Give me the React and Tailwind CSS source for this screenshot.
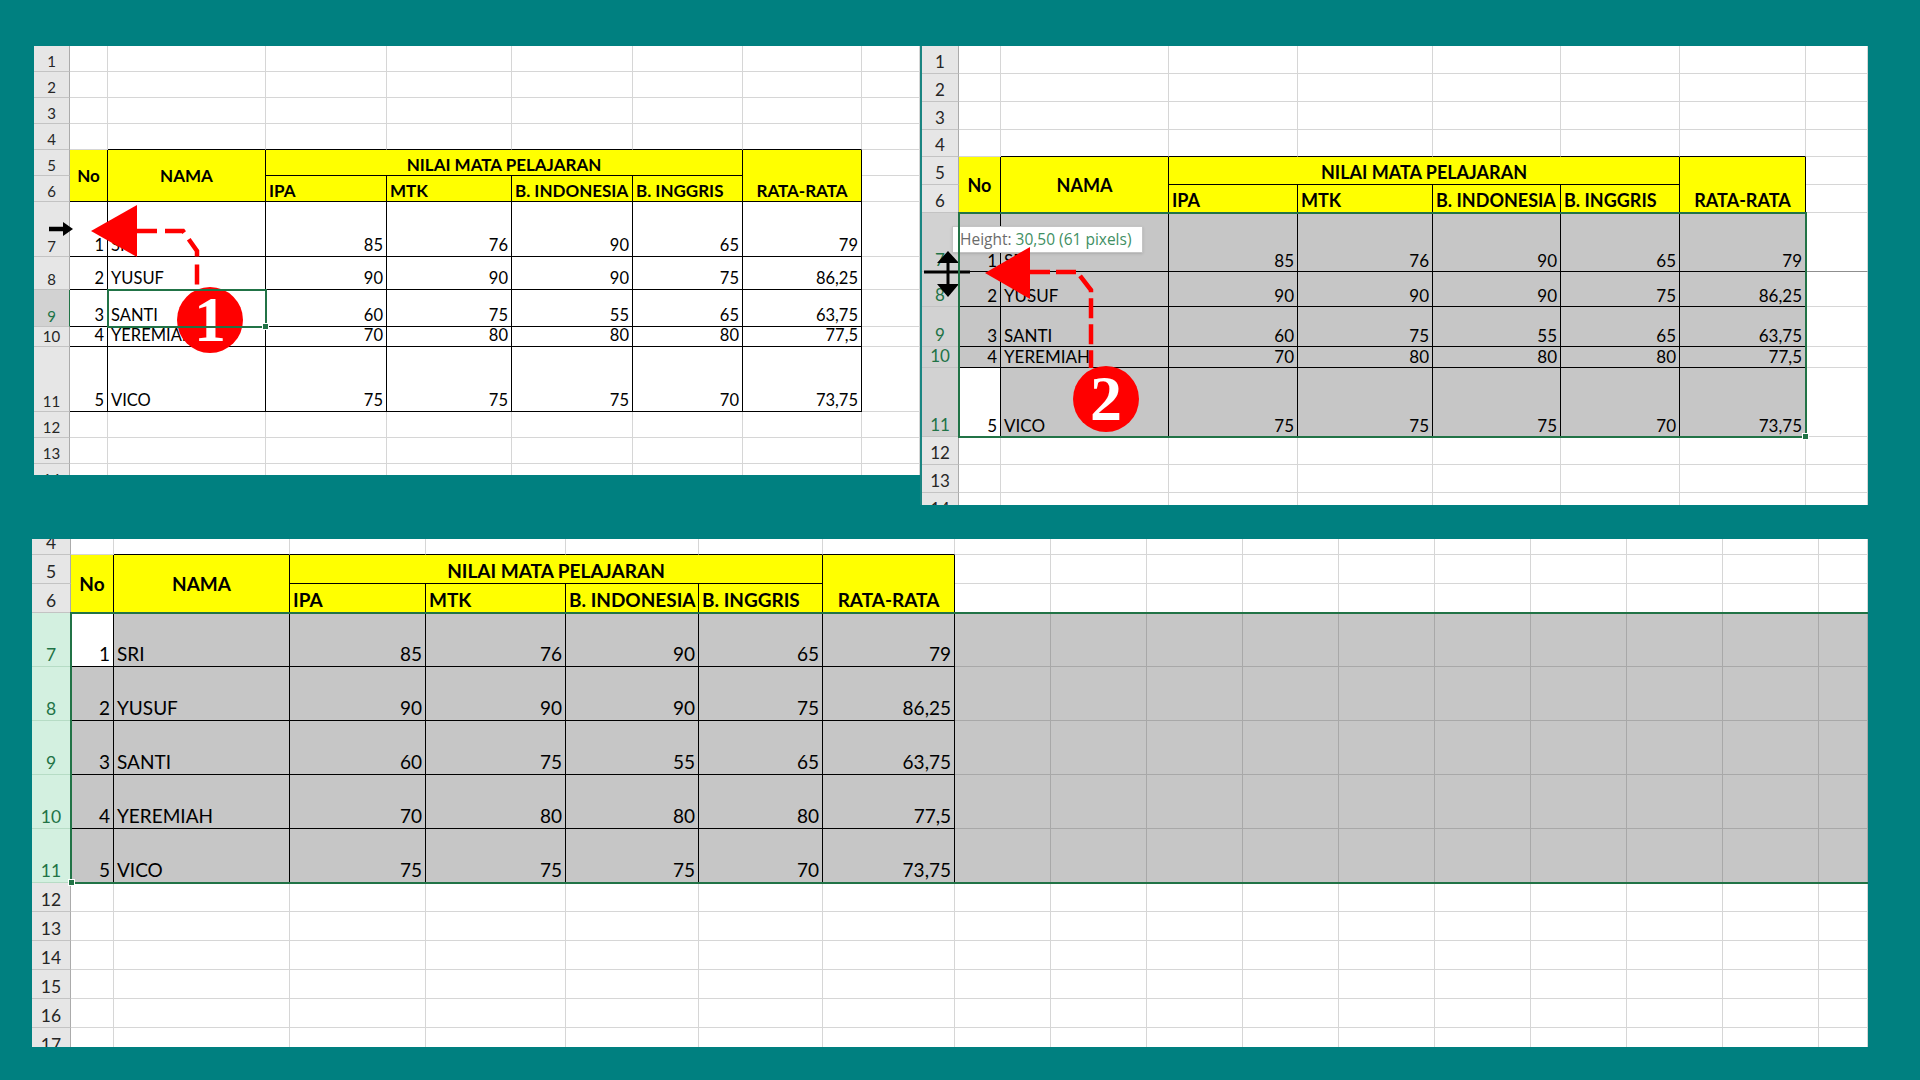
import React from 'react';

const DATA = [
  ['1', 'SRI', '85', '76', '90', '65', '79'],
  ['2', 'YUSUF', '90', '90', '90', '75', '86,25'],
  ['3', 'SANTI', '60', '75', '55', '65', '63,75'],
  ['4', 'YEREMIAH', '70', '80', '80', '80', '77,5'],
  ['5', 'VICO', '75', '75', '75', '70', '73,75'],
];

const SUBJECTS = ['IPA', 'MTK', 'B. INDONESIA', 'B. INGGRIS'];

const GRID = 'border-b border-r border-[#d6d6d6]';
const HEAD = 'flex bg-[#ffff00] font-bold border-b border-r border-black leading-[1.2] whitespace-nowrap';
const ROWHEAD = {
  normal: 'bg-[#e6e6e6] text-[#262626] border-b-[#c3c3c3] border-r-[#ababab]',
  picked: 'bg-[#d2d2d2] text-[#217346] border-b-[#c3c3c3] border-r-[#217346]',
  full: 'bg-[#d3f0e0] text-[#217346] border-b-[#b6dcc5] border-r-[#217346]',
};

const range = (a, b) => Array.from({ length: b - a + 1 }, (_, i) => a + i);

function Sheet({ cfg }) {
  const out = [];
  const extras = (r) =>
    Array.from({ length: cfg.extra }, (_, i) => <div key={`${r}x${i}`} className={cfg.extraCls(r)} />);

  cfg.rows.forEach((r) => {
    out.push(
      <div
        key={`h${r}`}
        className={`flex items-end justify-center pb-[1px] leading-[1.2] border-b border-r ${cfg.numText} ${cfg.rowHead(r)}`}
      >
        {r}
      </div>
    );

    if (r === 5) {
      out.push(
        <div key="no" className={`${HEAD} row-span-2 items-center justify-center pt-[2px] ${cfg.headText}`}>No</div>,
        <div key="nama" className={`${HEAD} row-span-2 items-center justify-center pt-[2px] ${cfg.headText}`}>NAMA</div>,
        <div key="nilai" className={`${HEAD} col-span-4 items-end justify-center ${cfg.headText}`}>
          NILAI MATA PELAJARAN
        </div>,
        <div key="rata" className={`${HEAD} row-span-2 items-end justify-center ${cfg.headText}`}>
          RATA-RATA
        </div>,
        ...extras(r)
      );
    } else if (r === 6) {
      SUBJECTS.forEach((s) =>
        out.push(
          <div key={s} className={`${HEAD} items-end pl-[3px] ${cfg.headText}`}>{s}</div>
        )
      );
      out.push(...extras(r));
    } else if (r >= 7 && r <= 11) {
      DATA[r - 7].forEach((v, c) =>
        out.push(
          <div
            key={`${r}-${c}`}
            className={`flex items-end px-[3px] border-b border-r border-black leading-[1.2] whitespace-nowrap ${cfg.dataText} ${c === 1 ? 'justify-start' : 'justify-end'} ${cfg.fill(r, c)}`}
          >
            {v}
          </div>
        )
      );
      out.push(...extras(r));
    } else {
      range(0, 6).forEach((c) =>
        out.push(
          <div
            key={`${r}-${c}`}
            className={r === 4 && c > 0 ? 'border-b border-r border-r-[#d6d6d6] border-b-black' : GRID}
          />
        )
      );
      out.push(...extras(r));
    }
  });

  return (
    <div className={`relative grid ${cfg.grid}`}>
      {out}
      {cfg.overlay}
    </div>
  );
}

const P1 = {
  grid: 'grid-cols-[36px_38px_158px_121px_125px_121px_110px_119px_58px] grid-rows-[26px_26px_26px_26px_26px_26px_55px_33px_37px_20px_65px_26px_26px_26px]',
  rows: range(1, 14),
  extra: 1,
  numText: 'text-[15px]',
  headText: 'text-[17px]',
  dataText: 'text-[16.5px]',
  rowHead: (r) => (r === 9 ? ROWHEAD.picked : ROWHEAD.normal),
  fill: () => 'bg-white',
  extraCls: () => GRID,
  overlay: (
    <div className="absolute -inset-px z-10 col-start-3 col-end-4 row-start-9 row-end-10 border-2 border-[#217346]">
      <span className="absolute -right-[4px] -bottom-[4px] w-[7px] h-[7px] bg-[#217346] border border-white" />
    </div>
  ),
};

const P2 = {
  grid: 'grid-cols-[37px_42px_168px_129px_135px_128px_119px_126px_62px] grid-rows-[28px_28px_28px_27px_28px_28px_59px_35px_40px_21px_69px_28px_28px_28px]',
  rows: range(1, 14),
  extra: 1,
  numText: 'text-[17px]',
  headText: 'text-[18px]',
  dataText: 'text-[17px]',
  rowHead: (r) => (r >= 7 && r <= 11 ? ROWHEAD.picked : ROWHEAD.normal),
  fill: (r, c) => (r === 11 && c === 0 ? 'bg-white' : 'bg-[#c6c6c6]'),
  extraCls: (r) => (r === 7 ? 'border-b border-r border-b-[#8f8f8f] border-r-[#d6d6d6]' : GRID),
  overlay: (
    <div className="absolute -inset-px z-10 col-start-2 col-end-9 row-start-7 row-end-12 border-2 border-[#217346]">
      <span className="absolute -right-[4px] -bottom-[4px] w-[7px] h-[7px] bg-[#217346] border border-white" />
    </div>
  ),
};

const P3 = {
  grid: '-mt-[13px] grid-cols-[39px_43px_176px_136px_140px_133px_124px_132px_96px_96px_96px_96px_96px_96px_96px_96px_96px_49px] grid-rows-[29px_29px_29px_54px_54px_54px_54px_54px_29px_29px_29px_29px_29px_29px]',
  rows: range(4, 17),
  extra: 10,
  numText: 'text-[17.5px]',
  headText: 'text-[19px]',
  dataText: 'text-[19px]',
  rowHead: (r) => (r >= 7 && r <= 11 ? ROWHEAD.full : ROWHEAD.normal),
  fill: (r, c) => (r === 7 && c === 0 ? 'bg-white' : 'bg-[#c6c6c6]'),
  extraCls: (r) => (r >= 7 && r <= 11 ? 'bg-[#c6c6c6] border-b border-r border-[#a8a8a8]' : GRID),
  overlay: (
    <div className="absolute -inset-px z-10 col-start-2 col-end-[-1] row-start-4 row-end-9 border-y-2 border-l-2 border-[#217346]">
      <span className="absolute -left-[4px] -bottom-[4px] w-[7px] h-[7px] bg-[#217346] border border-white" />
    </div>
  ),
};

function Marker({ n, className }) {
  return (
    <div
      className={`absolute w-[66px] h-[66px] rounded-full bg-[#ff0000] flex items-center justify-center text-white font-bold text-[64px] leading-none font-['Liberation_Serif',serif] ${className}`}
    >
      {n}
    </div>
  );
}

export default function App() {
  return (
    <div className="relative w-[1920px] h-[1080px] overflow-hidden bg-[#008080] pt-[46px] text-black font-[Lato,sans-serif]">
      <div className="flex items-start pl-[34px]">
        <div className="w-[886px] h-[429px] overflow-hidden bg-white">
          <Sheet cfg={P1} />
        </div>
        <div className="w-[948px] h-[459px] overflow-hidden bg-white border-l-2 border-[#1a8582]">
          <Sheet cfg={P2} />
        </div>
      </div>

      <div className="mt-[34px] ml-[32px] w-[1836px] h-[508px] overflow-hidden bg-white">
        <Sheet cfg={P3} />
      </div>

      {/* tooltip row height */}
      <div className="absolute left-[952px] top-[226px] w-[191px] h-[27px] flex items-center px-[7px] bg-white border border-[#c4c4c4] shadow-sm whitespace-nowrap text-[15.5px] leading-none font-['Open_Sans',sans-serif]">
        <span className="text-[#6b6b6b]">Height:&nbsp;</span>
        <span className="text-[#3f8f63]">30,50 (61 pixels)</span>
      </div>

      <svg className="absolute inset-0 pointer-events-none" width="1920" height="1080" viewBox="0 0 1920 1080">
        {/* panel 1 */}
        <path d="M49 229 H65" stroke="#000" strokeWidth="4.5" />
        <path d="M63 222 L73 229 L63 236 Z" fill="#000" />
        <path d="M137 231 H183 L197 251 V292" fill="none" stroke="#ff0000" strokeWidth="4.5" strokeDasharray="20 8" />
        <path d="M91 231 L137 205 L137 257 Z" fill="#ff0000" />

        {/* panel 2 */}
        <path d="M1030 272 H1077 L1091 290 V368" fill="none" stroke="#ff0000" strokeWidth="4.5" strokeDasharray="20 6" />
        <path d="M985 273 L1030 247 L1030 299 Z" fill="#ff0000" />
        <path d="M924 272 H970" stroke="#000" strokeWidth="3" />
        <path d="M948 258 V290" stroke="#000" strokeWidth="3" />
        <path d="M937 263 L948 251 L959 263 Z" fill="#000" />
        <path d="M937 284 L948 297 L959 284 Z" fill="#000" />
      </svg>

      <Marker n="1" className="left-[177px] top-[287px]" />
      <Marker n="2" className="left-[1073px] top-[366px]" />
    </div>
  );
}
